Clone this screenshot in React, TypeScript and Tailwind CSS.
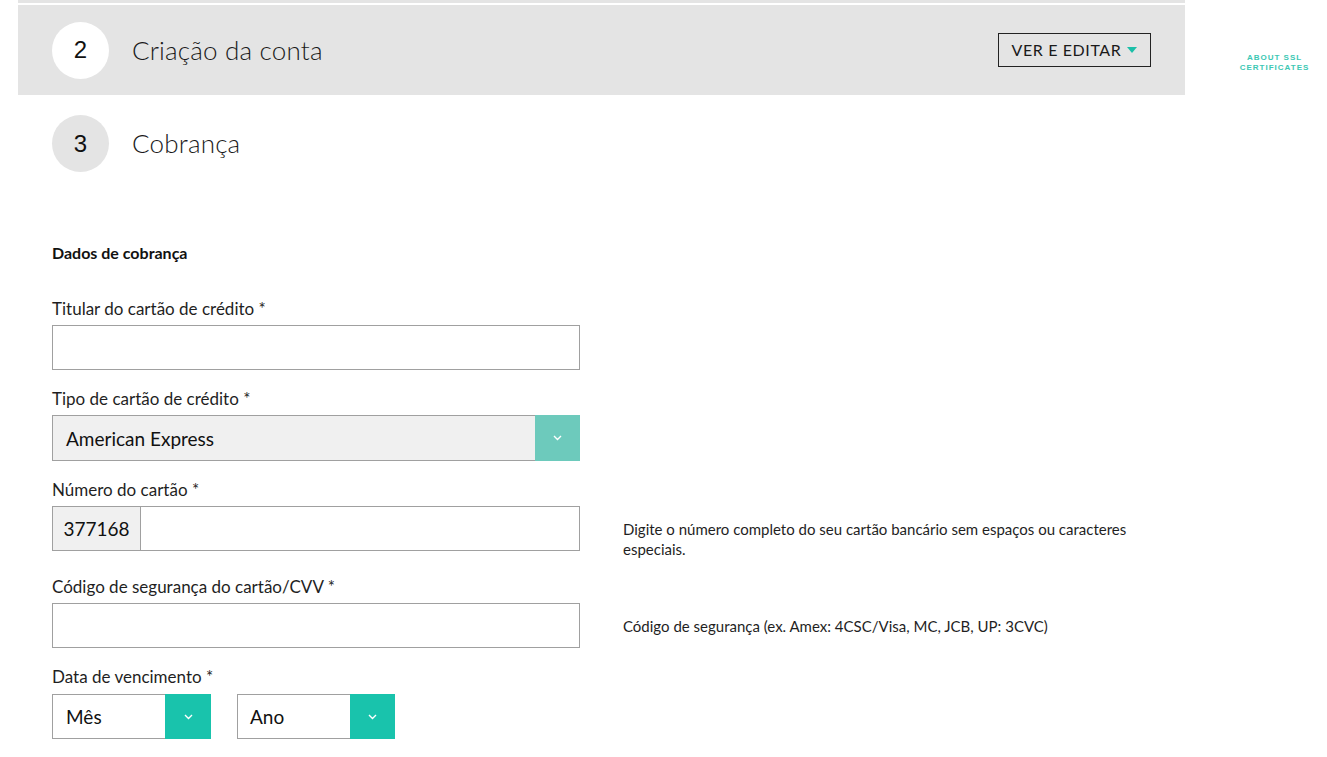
import React from "react";

const Chevron = ({ className = "" }: { className?: string }) => (
  <svg width="9" height="6" viewBox="0 0 9 6" className={className}>
    <path d="M1 1l3.5 3.5L8 1" fill="none" stroke="white" strokeWidth="1.4" />
  </svg>
);

const Step = ({ n, title, active }: { n: number; title: string; active?: boolean }) => (
  <div className="flex items-center">
    <div
      className={
        "w-[57px] h-[57px] rounded-full flex items-center justify-center text-[24px] text-[#111] font-['Liberation_Sans',sans-serif] " +
        (active ? "bg-white" : "bg-[#e4e4e4]")
      }
    >
      {n}
    </div>
    <div className="ml-[23px] text-[26px] font-light text-[#1a1a1a] tracking-[0.2px]">{title}</div>
  </div>
);

const Label = ({ children }: { children: React.ReactNode }) => (
  <div className="text-[17px] leading-6 text-[#1f1f1f] mb-1">{children}</div>
);

const Help = ({ children }: { children: React.ReactNode }) => (
  <div className="ml-[43px] pt-[41px] w-[515px] text-[15px] leading-5 text-[#1f1f1f]">{children}</div>
);

export default function App() {
  return (
    <div className="min-h-[757px] bg-white flex font-['Lato',sans-serif]">
      <div className="ml-[18px] w-[1167px]">
        <div className="h-[3px] bg-[#e4e4e4]" />
        <div className="h-[90px] mt-[2px] bg-[#e4e4e4] px-[34px] flex items-center justify-between">
          <Step n={2} title="Criação da conta" active />
          <button className="h-[34px] w-[153px] border border-[#222] flex items-center justify-center gap-[6px] text-[16px] tracking-[0.6px] text-[#1a1a1a]">
            VER E EDITAR
            <svg width="10" height="6" viewBox="0 0 10 6">
              <path d="M0 0h10L5 6z" fill="#1bbfa8" />
            </svg>
          </button>
        </div>
        <div className="px-[34px] pt-[20px]">
          <Step n={3} title="Cobrança" />

          <div className="mt-[71px] text-[16px] leading-5 font-bold text-[#111]">Dados de cobrança</div>

          <div className="mt-[34px] w-[528px]">
            <Label>Titular do cartão de crédito *</Label>
            <div className="h-[45px] border border-[#a0a0a0] bg-white" />
          </div>

          <div className="mt-[17px] w-[528px]">
            <Label>Tipo de cartão de crédito *</Label>
            <div className="h-[46px] border border-[#a0a0a0] bg-[#f0f0f0] flex">
              <div className="flex-1 flex items-center pl-[13px] pt-[2px] text-[19px] text-[#111]">American Express</div>
              <div className="w-[45px] -my-px -mr-px bg-[#6dcabc] flex items-center justify-center">
                <Chevron />
              </div>
            </div>
          </div>

          <div className="mt-[17px] flex items-start">
            <div className="w-[528px]">
              <Label>Número do cartão *</Label>
              <div className="h-[45px] border border-[#a0a0a0] bg-white flex">
                <div className="w-[88px] bg-[#f0f0f0] border-r border-[#a0a0a0] flex items-center justify-center pt-[2px] text-[19px] text-[#111]">
                  377168
                </div>
              </div>
            </div>
            <Help>
              Digite o número completo do seu cartão bancário sem espaços ou caracteres especiais.
            </Help>
          </div>

          <div className="mt-[16px] flex items-start">
            <div className="w-[528px]">
              <Label>Código de segurança do cartão/CVV *</Label>
              <div className="h-[45px] border border-[#a0a0a0] bg-white" />
            </div>
            <Help>Código de segurança (ex. Amex: 4CSC/Visa, MC, JCB, UP: 3CVC)</Help>
          </div>

          <div className="mt-[17px]">
            <div className="text-[17px] leading-6 text-[#1f1f1f] mb-[5px]">Data de vencimento *</div>
            <div className="flex gap-[26px]">
              <div className="w-[159px] h-[45px] border border-[#a0a0a0] bg-white flex">
                <div className="flex-1 flex items-center pl-[13px] pt-[2px] text-[19px] text-[#111]">Mês</div>
                <div className="w-[46px] -my-px -mr-px bg-[#19c3ac] flex items-center justify-center">
                  <Chevron />
                </div>
              </div>
              <div className="w-[158px] h-[45px] border border-[#a0a0a0] bg-white flex">
                <div className="flex-1 flex items-center pl-[12px] pt-[2px] text-[19px] text-[#111]">Ano</div>
                <div className="w-[45px] -my-px -mr-px bg-[#19c3ac] flex items-center justify-center">
                  <Chevron />
                </div>
              </div>
            </div>
          </div>
        </div>
      </div>
      <div className="flex-1 pt-[53px] pl-[37px]">
        <div className="w-[105px] text-center text-[8px] leading-[10px] font-bold tracking-[1px] text-[#3cc8b4] font-['Liberation_Sans',sans-serif]">
          ABOUT SSL
          <br />
          CERTIFICATES
        </div>
      </div>
    </div>
  );
}
